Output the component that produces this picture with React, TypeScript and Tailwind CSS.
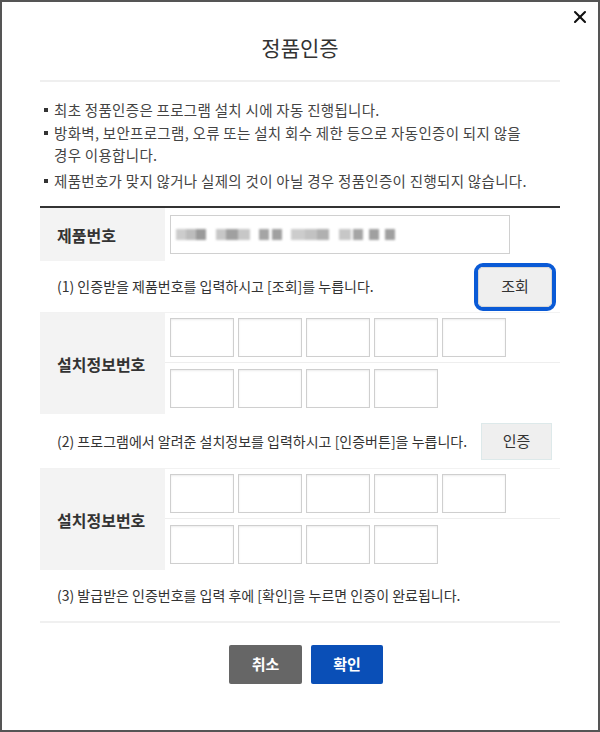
import { X } from 'lucide-react';

const font = { fontFamily: '"Noto Sans CJK KR", "Noto Sans", sans-serif' };

const Box = () => (
  <div className="h-[39px] w-[64px] border border-[#cfcfcf] bg-white shadow-[inset_0_1px_2px_rgba(0,0,0,0.08)]" />
);

const InstallRow = () => (
  <div className="flex h-[102px] border-t border-[#f2f2f2]">
    <div className="flex w-[125px] items-center bg-[#f3f3f3] pl-[17px] text-[16px] font-bold text-[#333]">
      설치정보번호
    </div>
    <div className="flex flex-1 flex-col">
      <div className="flex h-[50px] items-center gap-1 border-b border-[#eeeeee] pl-[5px]">
        <Box />
        <Box />
        <Box />
        <Box />
        <Box />
      </div>
      <div className="flex flex-1 items-center gap-1 pl-[5px]">
        <Box />
        <Box />
        <Box />
        <Box />
      </div>
    </div>
  </div>
);

// blurred product key
const Masked = () => {
  const blocks = [
    [0, 10, 0.45], [10, 10, 0.6], [20, 10, 0.9],
    [40, 10, 0.5], [50, 12, 0.85], [62, 12, 0.5],
    [83, 10, 0.8], [96, 10, 0.85],
    [115, 14, 0.45], [129, 12, 0.55], [141, 12, 0.7],
    [163, 12, 0.5], [177, 10, 0.8], [193, 10, 0.85], [209, 10, 0.85],
  ];
  return (
    <div className="relative ml-[5px] h-[11px] w-[222px] blur-[1.2px]">
      {blocks.map(([l, w, o], i) => (
        <span
          key={i}
          className="absolute top-0 h-[11px] bg-[#8f8f8f]"
          style={{ left: l, width: w, opacity: o }}
        />
      ))}
    </div>
  );
};

const Bullet = () => <span className="mr-[6px] mt-[9px] h-[4px] w-[4px] shrink-0 bg-[#333]" />;

export default function App() {
  return (
    <div className="relative h-[732px] w-[600px] border-2 border-[#555] bg-white text-[#333]" style={font}>
      <button className="absolute right-[8px] top-[5px] text-[#111]">
        <X size={20} strokeWidth={2.5} />
      </button>

      <div className="px-[38px]">
        <h1 className="pt-[31px] text-center text-[21px] leading-[28px] text-[#333]">정품인증</h1>
        <div className="mt-[19px] h-[2px] bg-[#efefef]" />

        <ul className="pl-[4px] pt-[17px] text-[14.5px] leading-[22px] tracking-[0.3px] text-[#444]">
          <li className="flex">
            <Bullet />
            최초 정품인증은 프로그램 설치 시에 자동 진행됩니다.
          </li>
          <li className="mt-[1px] flex">
            <Bullet />
            <span>
              방화벽, 보안프로그램, 오류 또는 설치 회수 제한 등으로 자동인증이 되지 않을
              <br />
              경우 이용합니다.
            </span>
          </li>
          <li className="mt-[4px] flex">
            <Bullet />
            제품번호가 맞지 않거나 실제의 것이 아닐 경우 정품인증이 진행되지 않습니다.
          </li>
        </ul>

        <div className="mt-[14px] h-[2px] bg-[#333]" />

        <div className="flex h-[53px]">
          <div className="flex w-[125px] items-center bg-[#f3f3f3] pl-[17px] text-[16px] font-bold text-[#333]">
            제품번호
          </div>
          <div className="flex flex-1 items-center pl-[5px]">
            <div className="flex h-[39px] w-[340px] items-center border border-[#d0d0d0] bg-white">
              <Masked />
            </div>
          </div>
        </div>

        <div className="flex h-[51px] items-center justify-between pl-[17px] pr-[4px]">
          <span className="text-[14px] text-[#333]">(1) 인증받을 제품번호를 입력하시고 [조회]를 누릅니다.</span>
          <div className="rounded-[9px] border-[4px] border-[#0a5ad6]">
            <button className="h-[40px] w-[74px] rounded-[5px] border border-[#d6d6d6] bg-[#efefef] text-[15px] text-[#333]">
              조회
            </button>
          </div>
        </div>

        <InstallRow />

        <div className="flex h-[54px] items-center justify-between pl-[17px] pr-[8px]">
          <span className="text-[14px] text-[#333]">(2) 프로그램에서 알려준 설치정보를 입력하시고 [인증버튼]을 누릅니다.</span>
          <button className="h-[37px] w-[71px] border border-[#dde9ea] bg-[#efefef] text-[15px] text-[#333]">
            인증
          </button>
        </div>

        <InstallRow />

        <div className="flex h-[53px] items-center border-b-2 border-[#f0f0f0] pl-[17px]">
          <span className="text-[14px] text-[#333]">(3) 발급받은 인증번호를 입력 후에 [확인]을 누르면 인증이 완료됩니다.</span>
        </div>

        <div className="ml-[12px] flex justify-center gap-[9px] pt-[22px]">
          <button className="h-[39px] w-[73px] rounded-[2px] bg-[#666] text-[15px] font-bold text-white">취소</button>
          <button className="h-[39px] w-[72px] rounded-[2px] bg-[#0a4fb7] text-[15px] font-bold text-white">확인</button>
        </div>
      </div>
    </div>
  );
}
